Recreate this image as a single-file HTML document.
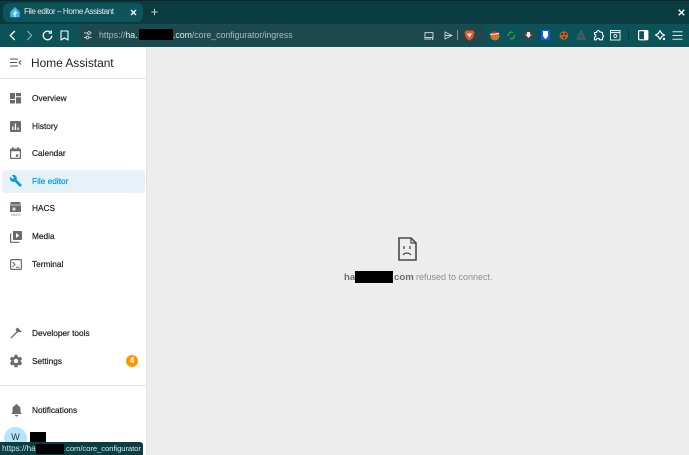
<!DOCTYPE html>
<html><head><meta charset="utf-8"><style>
*{box-sizing:border-box}
html,body{margin:0;padding:0;width:689px;height:455px;overflow:hidden;background:#ededed;font-family:"Liberation Sans",sans-serif}
.a{position:absolute}
.t{position:absolute;white-space:nowrap}
svg{position:absolute;overflow:visible}
.nav{position:absolute;left:32px;font-size:8.3px;color:#212121;white-space:nowrap;line-height:12px;-webkit-text-stroke:.2px #212121}
</style></head><body>
<div class="a" style="left:0;top:0;width:689px;height:24px;background:#0a3b40"></div>
<div class="a" style="left:0;top:0;width:689px;height:1px;background:#0f2528"></div>
<div class="a" style="left:3px;top:3px;width:140px;height:19px;background:#0d545b;border-radius:6px"></div>
<svg style="left:10px;top:7px" width="10" height="11" viewBox="0 0 10 11"><path d="M5 0L9.700 4.700V10.300H.3V4.700Z" fill="#41b6ec"/><path d="M5 3.500V10.300M5 8L3.200 6.200M5 7L6.800 5.200" stroke="#fff" stroke-width=".9" fill="none"/></svg>
<div class="t" style="left:24px;top:6px;font-size:8.200px;letter-spacing:-.44px;line-height:12px;color:#dfeaeb">File editor – Home Assistant</div>
<svg style="left:130px;top:9px" width="7" height="7"><path d="M1 1L6 6M6 1L1 6" stroke="#fff" stroke-width="1.400"/></svg>
<svg style="left:151px;top:8px" width="7" height="8"><path d="M3.500 .8V7.200M.3 4H6.700" stroke="#b9cfd1" stroke-width="1"/></svg>
<svg style="left:678px;top:9px" width="7" height="7"><path d="M.7 .7L6.300 6.300M6.300 .7L.7 6.300" stroke="#fff" stroke-width="1.400"/></svg>

<div class="a" style="left:0;top:24px;width:689px;height:23px;background:#0c5259"></div>
<div class="a" style="left:78px;top:25px;width:408px;height:20px;background:#1d484d;border-radius:6px"></div>
<svg style="left:9px;top:30px" width="7" height="11"><path d="M5.800 1L1.300 5.500L5.800 10" stroke="#fff" stroke-width="1.300" fill="none"/></svg>
<svg style="left:26px;top:30px" width="7" height="11"><path d="M1.200 1L5.700 5.500L1.200 10" stroke="#8aa8ab" stroke-width="1.200" fill="none"/></svg>
<svg style="left:42px;top:30px" width="11" height="11"><path d="M9.800 5.700A4.300 4.300 0 1 1 8.300 2.200M9.300 .5V3.200H6.600" stroke="#fff" stroke-width="1.200" fill="none"/></svg>
<svg style="left:60px;top:30px" width="9" height="11"><path d="M1 1H8V10L4.500 8L1 10Z" stroke="#fff" stroke-width="1.100" fill="none" stroke-linejoin="round"/></svg>
<svg style="left:83px;top:31px" width="9" height="9"><path d="M1 2H4.500M7.800 2H8.500M1 6.500H3M6.500 6.500H8.500" stroke="#c8d8da" stroke-width=".9"/><circle cx="6" cy="2" r="1.400" stroke="#c8d8da" stroke-width=".9" fill="none"/><circle cx="4.500" cy="6.500" r="1.400" stroke="#c8d8da" stroke-width=".9" fill="none"/></svg>
<div class="t" style="left:99px;top:29px;font-size:8.800px;line-height:12px;color:#a7bcbf">https://<span style="color:#e4eced">ha.</span></div>
<div class="a" style="left:139px;top:29px;width:34px;height:11px;background:#000"></div>
<div class="t" style="left:173px;top:29px;font-size:8.800px;line-height:12px;color:#a7bcbf;letter-spacing:-.04px"><span style="color:#e4eced">.com</span>/core_configurator/ingress</div>
<svg style="left:424px;top:32px" width="11" height="8"><path d="M1 .6H9V5.500H1Z" stroke="#c3d3d5" stroke-width="1" fill="none"/><path d="M0 7H7M8.500 6V8M7.700 7H9.500" stroke="#c3d3d5" stroke-width=".9"/></svg>
<svg style="left:444px;top:31px" width="9" height="9"><path d="M1 1L8 4.500L1 8ZM1 4.500H8" stroke="#c3d3d5" stroke-width=".9" fill="none"/></svg>
<div class="a" style="left:457px;top:30px;width:1px;height:10px;background:#7d9497"></div>
<svg style="left:464px;top:30px" width="11" height="11"><path d="M2 .5H9L10.500 2.500L9 8L5.500 10.800L2 8L.5 2.500Z" fill="#f0532a"/><path d="M3 3.500H8L5.500 7.500Z" fill="#fff"/></svg>
<svg style="left:489px;top:30px" width="11" height="11"><circle cx="6" cy="6" r="4.500" fill="#c97a35"/><path d="M1 4L5 .7L10 3L6 4.500Z" fill="#d8232a"/><path d="M1 4.300L6 4L10 3.200" stroke="#fff" stroke-width="1"/></svg>
<svg style="left:507px;top:31px" width="9" height="9"><path d="M1.500 5A3 3 0 0 1 6 1.700M7.500 4A3 3 0 0 1 3 7.300" stroke="#2f9a45" stroke-width="1.500" fill="none"/></svg>
<div class="a" style="left:524px;top:30px;width:9px;height:10px;background:#3c4144;border-radius:1px"></div>
<svg style="left:525px;top:31px" width="7" height="8"><path d="M2 1H5V3.500H6.800L3.500 7L.2 3.500H2Z" fill="#e8e8e8"/></svg>
<div class="a" style="left:541px;top:30px;width:9px;height:10px;background:#175ddc;border-radius:1px"></div>
<svg style="left:543px;top:31px" width="5" height="8"><path d="M0 0H5V4C5 6 3.500 7 2.500 8C1.500 7 0 6 0 4Z" fill="#fff"/></svg>
<svg style="left:559px;top:31px" width="10" height="9"><circle cx="4.800" cy="4.500" r="4.300" fill="#b5642a"/><circle cx="3" cy="3" r="1" fill="#3a1e0a"/><circle cx="6.500" cy="3" r="1" fill="#3a1e0a"/><circle cx="5" cy="6.500" r="1" fill="#3a1e0a"/></svg>
<svg style="left:576px;top:30px" width="10" height="10"><path d="M5 1L7 4.500H3ZM1 9L2.800 5.500L4.500 9ZM5.500 9L7.200 5.500L9 9Z" fill="none" stroke="#4a6265" stroke-width="1.200"/></svg>
<svg style="left:593px;top:30px" width="11" height="11"><path d="M1.500 2.500H3.700A1.500 1.500 0 0 1 6.700 1.800L9.500 2.500V5A1.300 1.300 0 0 1 9.500 7.500V9.800H6.500A1.500 1.500 0 0 0 3.500 9.800H1.500V7A1.300 1.300 0 0 0 1.500 4.300Z" stroke="#fff" stroke-width="1.100" fill="none" stroke-linejoin="round"/></svg>
<svg style="left:610px;top:30px" width="11" height="11"><rect x=".5" y=".5" width="9.500" height="9.500" stroke="#e2ecec" stroke-width="1" fill="none"/><path d="M.5 2.500H10" stroke="#e2ecec" stroke-width="1.200"/><circle cx="5.300" cy="6" r="1.500" stroke="#e2ecec" fill="none" stroke-width=".9"/></svg>
<div class="a" style="left:628px;top:30px;width:1px;height:10px;background:#083a3f"></div>
<svg style="left:638px;top:30px" width="11" height="11"><rect x=".6" y=".6" width="9.200" height="9.200" rx="1" stroke="#fff" stroke-width="1.200" fill="none"/><rect x="6" y="1" width="3.500" height="8.500" fill="#fff"/></svg>
<svg style="left:655px;top:30px" width="11" height="11"><path d="M5 .7L6.800 3.700L9.500 5L6.800 6.500L5 9.300L3.200 6.500L.5 5L3.200 3.700Z" stroke="#fff" stroke-width="1.200" fill="none" stroke-linejoin="round"/><circle cx="9" cy="9" r="1.200" fill="#fff"/></svg>
<svg style="left:672px;top:31px" width="11" height="9"><path d="M.5 .7H10.500M.5 4.500H10.500M.5 8.300H10.500" stroke="#dbe8e8" stroke-width="1"/></svg>

<div class="a" style="left:0;top:47px;width:146px;height:408px;background:#fff"></div>
<div class="a" style="left:146px;top:47px;width:1px;height:408px;background:#e3e3e3"></div>
<div class="a" style="left:0;top:78px;width:146px;height:1px;background:#e3e3e3"></div>
<svg style="left:10px;top:58px" width="12" height="10"><path d="M0 1H8M0 4.500H7M0 8H8M11 2.500L9 4.500L11 6.500" stroke="#555" stroke-width="1" fill="none"/></svg>
<div class="t" style="left:31px;top:56px;font-size:11.900px;line-height:15px;color:#212121">Home Assistant</div>

<svg style="left:10px;top:93px" width="11" height="11"><path d="M0 0H5V6H0ZM6 0H11V3.300H6ZM0 7H5V10.500H0ZM6 4.300H11V10.500H6Z" fill="#6b6b6b"/></svg>
<div class="nav" style="top:92px">Overview</div>
<svg style="left:10px;top:121px" width="11" height="11"><path fill-rule="evenodd" d="M1 0H10A1 1 0 0 1 11 1V10A1 1 0 0 1 10 11H1A1 1 0 0 1 0 10V1A1 1 0 0 1 1 0ZM2.200 5.500V9H3.500V5.500ZM4.800 2.500V9H6.100V2.500ZM7.400 6.500V9H8.700V6.500Z" fill="#6b6b6b"/></svg>
<div class="nav" style="top:120px">History</div>
<svg style="left:10px;top:147px" width="11" height="12"><path fill-rule="evenodd" d="M1 1.500H2.200V0H3.500V1.500H7.500V0H8.800V1.500H10A1 1 0 0 1 11 2.500V11A1 1 0 0 1 10 12H1A1 1 0 0 1 0 11V2.500A1 1 0 0 1 1 1.500ZM1.200 4.300V10.800H9.800V4.300ZM5.800 7.500H8.300V9.800H5.800Z" fill="#6b6b6b"/></svg>
<div class="nav" style="top:147px">Calendar</div>
<div class="a" style="left:2px;top:170px;width:143px;height:23px;background:#e6f2f8;border-radius:4px"></div>
<svg style="left:10px;top:175px" width="12" height="12" viewBox="0 0 14 14"><path d="M13.500 11.300L7.700 5.500C8.300 4 8 2.300 6.800 1.100C5.500-.2 3.600-.4 2.100.3L4.800 3L3 4.800L.2 2.100C-.5 3.600-.2 5.500 1.100 6.800C2.300 8 4 8.300 5.500 7.700L11.300 13.500C11.600 13.800 12 13.800 12.300 13.500L13.500 12.300C13.800 12 13.800 11.600 13.500 11.300Z" fill="#039be5"/></svg>
<div class="nav" style="top:175px;color:#039be5;-webkit-text-stroke:.2px #039be5">File editor</div>
<svg style="left:10px;top:202px" width="11" height="10"><path d="M1 0H10L11 2.500V10H0V2.500Z" fill="#6b6b6b"/><path d="M0 3H11" stroke="#fff" stroke-width=".7"/><rect x="2.500" y="5.500" width="3" height="3" fill="#dcdcdc"/></svg>
<div class="t" style="left:11px;top:213px;font-size:3.500px;line-height:4px;color:#777">HACS</div>
<div class="nav" style="top:202px">HACS</div>
<svg style="left:10px;top:231px" width="12" height="12"><path d="M3 0H11A1 1 0 0 1 12 1V8A1 1 0 0 1 11 9H3Z" fill="#6b6b6b"/><path d="M6 2L9.300 4.500L6 7Z" fill="#fff"/><path d="M.6 2.500V11.300H9.500" stroke="#6b6b6b" stroke-width="1.200" fill="none"/></svg>
<div class="nav" style="top:230px">Media</div>
<svg style="left:10px;top:259px" width="12" height="11"><rect x=".6" y=".6" width="10.800" height="9.800" rx="1" stroke="#6b6b6b" stroke-width="1.200" fill="none"/><path d="M2.500 3L5 5.500L2.500 8M6 8.200H9.500" stroke="#6b6b6b" stroke-width="1" fill="none"/></svg>
<div class="nav" style="top:258px">Terminal</div>
<svg style="left:10px;top:327px" width="12" height="12"><path d="M.8 11.200L7 5" stroke="#6b6b6b" stroke-width="1.300"/><path d="M5.500 2.500L7.500 .5L11.500 4.500L10.500 5.500L8.800 4.700L7.500 6Z" fill="#6b6b6b"/></svg>
<div class="nav" style="top:327px">Developer tools</div>
<svg style="left:10px;top:355px" width="12" height="12" viewBox="0 0 24 24"><path d="M12 15.500A3.500 3.500 0 1 1 12 8.500A3.500 3.500 0 0 1 12 15.500ZM19.400 13C19.500 12.700 19.500 12.300 19.500 12S19.500 11.300 19.400 11L21.500 9.300C21.700 9.200 21.700 8.900 21.600 8.700L19.600 5.300C19.500 5.100 19.200 5 19 5.100L16.500 6.100C16 5.700 15.400 5.400 14.800 5.100L14.400 2.400C14.400 2.200 14.200 2 14 2H10C9.800 2 9.600 2.200 9.600 2.400L9.200 5.100C8.600 5.400 8 5.700 7.500 6.100L5 5.100C4.800 5 4.500 5.100 4.400 5.300L2.400 8.700C2.300 8.900 2.300 9.200 2.500 9.300L4.600 11C4.500 11.300 4.500 11.700 4.500 12S4.500 12.700 4.600 13L2.500 14.700C2.300 14.800 2.300 15.100 2.400 15.300L4.400 18.700C4.500 18.900 4.800 19 5 18.900L7.500 17.900C8 18.300 8.600 18.600 9.200 18.900L9.600 21.600C9.600 21.800 9.800 22 10 22H14C14.200 22 14.400 21.800 14.400 21.600L14.800 18.900C15.400 18.600 16 18.300 16.500 17.900L19 18.900C19.200 19 19.500 18.900 19.600 18.700L21.600 15.300C21.700 15.100 21.700 14.800 21.500 14.700Z" fill="#6b6b6b" transform="translate(-3 -3) scale(1.250)"/></svg>
<div class="nav" style="top:355px">Settings</div>
<div class="a" style="left:126px;top:355px;width:12px;height:12px;background:#ff9800;border-radius:50%;color:#fff;font-size:8px;font-weight:bold;line-height:12px;text-align:center">4</div>
<div class="a" style="left:0;top:385px;width:146px;height:1px;background:#e3e3e3"></div>
<svg style="left:11px;top:404px" width="11" height="13"><path d="M5.500 0C6.200 0 6.600 .5 6.600 1.200C8.500 1.700 9.500 3.300 9.500 5.200V8.500L11 10H0L1.500 8.500V5.200C1.500 3.300 2.500 1.700 4.400 1.200C4.400 .5 4.800 0 5.500 0ZM4 11H7A1.500 1.500 0 0 1 4 11Z" fill="#6b6b6b"/></svg>
<div class="nav" style="top:404px">Notifications</div>
<div class="a" style="left:4px;top:427px;width:23px;height:23px;background:#b3e5fc;border-radius:50%;color:#333;font-size:9px;line-height:21px;text-align:center">W</div>
<div class="a" style="left:30px;top:432px;width:16px;height:11px;background:#000"></div>

<div class="a" style="left:0;top:442px;width:143px;height:13px;background:#0b3e43;border-radius:0 3px 0 0"></div>
<div class="t" style="left:2px;top:443px;font-size:8.200px;line-height:11px;color:#dbe6e7">https://ha</div>
<div class="a" style="left:36px;top:444px;width:28px;height:10px;background:#000"></div>
<div class="t" style="left:64px;top:443px;font-size:7.700px;letter-spacing:-.08px;line-height:11px;color:#dbe6e7">.com/core_configurator</div>

<svg style="left:398px;top:237px" width="19" height="24" viewBox="0 0 19 24"><path d="M1 1H13L18 6V23H1Z" fill="none" stroke="#4a4a4a" stroke-width="1.600"/><path d="M13 1V6H18" fill="none" stroke="#4a4a4a" stroke-width="1.200"/><path d="M6 9V12M12 9V12M5 18C6.500 15.500 11 15.500 13 18" fill="none" stroke="#4a4a4a" stroke-width="1.300"/></svg>
<div class="t" style="left:344px;top:271px;font-size:9.600px;line-height:13px;color:#6e6e6e;font-weight:bold">ha</div>
<div class="a" style="left:355px;top:271px;width:38px;height:12px;background:#000"></div>
<div class="t" style="left:394px;top:271px;font-size:9.600px;line-height:13px;color:#6e6e6e;font-weight:bold">com</div>
<div class="t" style="left:416px;top:271px;font-size:9px;line-height:13px;color:#8e8e8e">refused to connect.</div>
</body></html>
